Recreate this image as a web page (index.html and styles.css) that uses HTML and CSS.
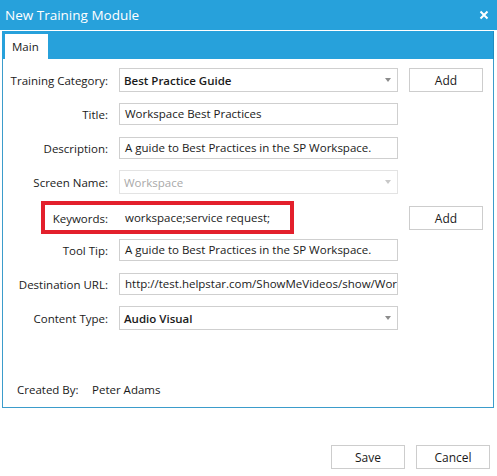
FILE: index.html
```html
<!DOCTYPE html>
<html>
<head>
<meta charset="utf-8">
<link rel="stylesheet" href="styles.css">
</head>
<body>
<div class="window">
  <div class="titlebar">
    <span class="title">New Training Module</span>
    <svg class="close" width="10" height="10" viewBox="0 0 10 10"><path d="M1.5 1.5 L8.5 8.5 M8.5 1.5 L1.5 8.5" stroke="#fff" stroke-width="2" fill="none"/></svg>
  </div>
  <div class="tabctl">
    <div class="tabstrip"><div class="tab">Main</div></div>
    <div class="panel">
      <div class="form">
        <label class="lbl">Training Category:</label>
        <div class="combo"><span>Best Practice Guide</span><i class="arrow"></i></div>
        <button class="btn">Add</button>

        <label class="lbl">Title:</label>
        <div class="text">Workspace Best Practices</div>
        <span></span>

        <label class="lbl">Description:</label>
        <div class="text">A guide to Best Practices in the SP Workspace.</div>
        <span></span>

        <label class="lbl">Screen Name:</label>
        <div class="combo disabled"><span>Workspace</span><i class="arrow"></i></div>
        <span></span>

        <label class="lbl kw">Keywords:</label>
        <div class="text plain kw">workspace;service request;</div>
        <button class="btn kw">Add</button>

        <label class="lbl">Tool Tip:</label>
        <div class="text">A guide to Best Practices in the SP Workspace.</div>
        <span></span>

        <label class="lbl">Destination URL:</label>
        <div class="text">http://test.helpstar.com/ShowMeVideos/show/WorkspaceBestPractices</div>
        <span></span>

        <label class="lbl">Content Type:</label>
        <div class="combo"><span>Audio Visual</span><i class="arrow"></i></div>
        <span></span>
      </div>
      <div class="created"><span class="clabel">Created By:</span><span>Peter Adams</span></div>
      <div class="highlight"></div>
    </div>
  </div>
  <div class="footer">
    <button class="btn">Save</button>
    <button class="btn">Cancel</button>
  </div>
</div>
</body>
</html>
```

FILE: styles.css
```css
html, body {
  margin: 0;
  padding: 0;
  background: #fff;
}
body {
  font-family: "Open Sans", "Noto Sans", sans-serif;
  font-size: 11.5px;
  color: #1a1a1a;
}
.window {
  width: 497px;
  height: 476px;
  display: flex;
  flex-direction: column;
}
.titlebar {
  height: 30px;
  background: #27a1db;
  color: #fff;
  display: flex;
  align-items: center;
  justify-content: space-between;
  padding: 0 8px 0 5px;
  box-sizing: border-box;
}
.title {
  font-size: 13.5px;
  margin-top: -1px;
}
.close {
  display: block;
}
.tabctl {
  margin: 1px 3px 0 2px;
}
.tabstrip {
  height: 28px;
  background: #27a1db;
  box-sizing: border-box;
  padding: 3px 0 0 3px;
  border-right: 1px solid #1f8cc0;
}
.tab {
  width: 43px;
  height: 25px;
  background: #fff;
  box-sizing: border-box;
  padding: 5px 0 0 7px;
  color: #1a1a1a;
}
.panel {
  position: relative;
  height: 349px;
  box-sizing: border-box;
  border: 1px solid #3b9ccb;
  border-top: none;
  display: flex;
  flex-direction: column;
}
.form {
  display: grid;
  grid-template-columns: 105px 279px 74px;
  column-gap: 11px;
  grid-auto-rows: 24px;
  row-gap: 10px;
  padding-top: 9px;
  align-items: center;
}
.lbl {
  text-align: right;
  white-space: nowrap;
}
.kw {
  position: relative;
  top: 2px;
}
.text {
  height: 22px;
  box-sizing: border-box;
  border: 1px solid #cfcfcf;
  padding: 0 5px;
  line-height: 20px;
  white-space: nowrap;
  overflow: hidden;
}
.text.plain {
  border-color: transparent;
}
.combo {
  height: 24px;
  box-sizing: border-box;
  border: 1px solid #cfcfcf;
  padding: 0 4px;
  display: flex;
  align-items: center;
  justify-content: space-between;
  font-weight: 600;
}
.combo.disabled {
  border-color: #e3e3e3;
  color: #a9a9a9;
  font-weight: 400;
}
.arrow {
  width: 0;
  height: 0;
  border-left: 3.5px solid transparent;
  border-right: 3.5px solid transparent;
  border-top: 4px solid #8c8c8c;
  margin-right: 2px;
}
.combo.disabled .arrow {
  border-top-color: #c8c8c8;
}
.btn {
  height: 24px;
  width: 74px;
  box-sizing: border-box;
  border: 1px solid #cdcdcd;
  background: #fff;
  font-family: inherit;
  font-size: 12px;
  color: #1a1a1a;
  padding: 0;
}
.created {
  margin-top: auto;
  padding: 0 0 10px 14px;
  display: flex;
}
.clabel {
  width: 75px;
}
.highlight {
  position: absolute;
  left: 38px;
  top: 142px;
  width: 253px;
  height: 33px;
  box-sizing: border-box;
  border: 4px solid #e3202c;
}
.footer {
  margin-top: 37px;
  display: flex;
  justify-content: flex-end;
  gap: 11px;
  padding-right: 7px;
}
```
